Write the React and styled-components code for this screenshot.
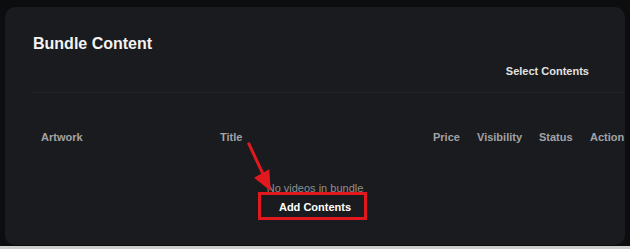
import React from "react";
import styled, { createGlobalStyle } from "styled-components";

const GlobalStyle = createGlobalStyle`
  html, body {
    margin: 0;
    padding: 0;
    background: #cdcdcd;
  }
  body {
    font-family: "Liberation Sans", Arial, sans-serif;
  }
`;

const Page = styled.div`
  box-sizing: border-box;
  height: 246px;
  padding: 7px 5px 1px 5px;
  background: #0c0d0f;
`;

const Card = styled.div`
  position: relative;
  box-sizing: border-box;
  height: 238px;
  padding: 27px 0 0 28px;
  background: #1a1b1e;
  border-radius: 10px;
  overflow: hidden;
`;

const Title = styled.h2`
  margin: 0;
  font-size: 16px;
  line-height: 20px;
  font-weight: 700;
  color: #f3f3f3;
`;

const Toolbar = styled.div`
  display: flex;
  justify-content: flex-end;
  padding: 10px 36px 14px 0;
  border-bottom: 1px solid #24252a;
`;

const TextButton = styled.button`
  border: 0;
  padding: 0;
  background: none;
  font-family: inherit;
  font-size: 11px;
  line-height: 14px;
  font-weight: 700;
  color: ${(p) => (p.$muted ? "#e2e2e2" : "#ffffff")};
  cursor: pointer;
`;

const HeaderRow = styled.div`
  display: grid;
  grid-template-columns: 179px 213px 44px 62px 51px 1fr;
  padding-top: 37px;
`;

const HeaderCell = styled.div`
  padding-left: 8px;
  font-size: 11px;
  line-height: 14px;
  font-weight: 700;
  color: #a2a3a6;
  white-space: nowrap;
`;

const Empty = styled.div`
  position: relative;
  display: flex;
  flex-direction: column;
  align-items: center;
  gap: 5px;
  margin-left: -28px;
  padding-top: 37px;
`;

const EmptyText = styled.div`
  font-size: 11px;
  line-height: 14px;
  color: #8d8e91;
`;

const Highlight = styled.div`
  position: absolute;
  left: 253px;
  top: 48px;
  width: 109px;
  height: 28px;
  box-sizing: border-box;
  border: 3px solid #e1181e;
  pointer-events: none;
`;

const Arrow = styled.svg`
  position: absolute;
  left: 0;
  top: 0;
  width: 100%;
  height: 100%;
  pointer-events: none;
`;

const columns = ["Artwork", "Title", "Price", "Visibility", "Status", "Action"];

export default function App() {
  return (
    <>
      <GlobalStyle />
      <Page>
        <Card>
          <Title>Bundle Content</Title>
          <Toolbar>
            <TextButton $muted>Select Contents</TextButton>
          </Toolbar>
          <HeaderRow>
            {columns.map((c) => (
              <HeaderCell key={c}>{c}</HeaderCell>
            ))}
          </HeaderRow>
          <Empty>
            <EmptyText>No videos in bundle</EmptyText>
            <TextButton>Add Contents</TextButton>
            <Highlight />
          </Empty>
          <Arrow viewBox="0 0 620 238">
            <line
              x1="243.3"
              y1="135.7"
              x2="258"
              y2="167"
              stroke="#e1181e"
              strokeWidth="3"
            />
            <polygon points="249,170.7 264.3,162.3 265.7,184" fill="#e1181e" />
          </Arrow>
        </Card>
      </Page>
    </>
  );
}
